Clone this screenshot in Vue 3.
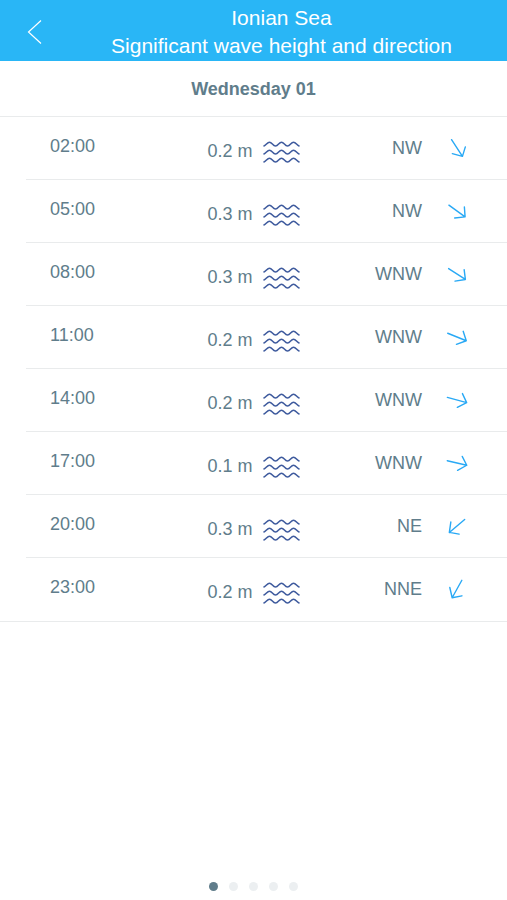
<script setup>
import { ref } from 'vue'

const readings = [
  { time: '02:00', height: '0.2 m', from: 'NW', angle: 57 },
  { time: '05:00', height: '0.3 m', from: 'NW', angle: 36 },
  { time: '08:00', height: '0.3 m', from: 'WNW', angle: 33 },
  { time: '11:00', height: '0.2 m', from: 'WNW', angle: 22 },
  { time: '14:00', height: '0.2 m', from: 'WNW', angle: 15 },
  { time: '17:00', height: '0.1 m', from: 'WNW', angle: 13 },
  { time: '20:00', height: '0.3 m', from: 'NE', angle: 140 },
  { time: '23:00', height: '0.2 m', from: 'NNE', angle: 119 }
]

const pages = 5
const current = ref(1)
</script>

<template>
  <div class="screen">
    <header class="bar">
      <button class="back" type="button" aria-label="Back">
        <svg width="16" height="26" viewBox="0 0 16 26" aria-hidden="true">
          <path d="M14 1.500 1.500 13 14 24.500" />
        </svg>
      </button>
      <h1 class="title">
        <span>Ionian Sea</span>
        <span>Significant wave height and direction</span>
      </h1>
    </header>

    <main class="content">
      <h2 id="day" class="day">Wednesday 01</h2>
      <div class="list">
        <table class="readings" aria-labelledby="day">
          <tbody>
            <tr v-for="r in readings" :key="r.time">
              <th class="time" scope="row">{{ r.time }}</th>
              <td class="wave">
                <div class="wave-box">
                  <span>{{ r.height }}</span>
                  <svg class="waves" width="38" height="22" viewBox="0 0 38 22" aria-hidden="true">
                    <path
                      v-for="y in [0, 8, 16]"
                      :key="y"
                      :transform="`translate(0 ${y})`"
                      d="M1.500 5.200C4.500 4 5 1.200 7.500 1.200S10.800 5 13.500 5 17 1.200 19.500 1.200 22.800 5 25.500 5 29 1.200 31.500 1.200 34.500 4 37.500 5.200"
                    />
                  </svg>
                </div>
              </td>
              <td class="direction">
                <div class="direction-box">
                  <span>{{ r.from }}</span>
                  <svg class="arrow" width="24" height="24" viewBox="-12 -12 24 24" aria-hidden="true">
                    <path :transform="`rotate(${r.angle})`" d="M-10 0H10M3.600-7.600 10 0 2.200 7" />
                  </svg>
                </div>
              </td>
            </tr>
          </tbody>
        </table>
      </div>
    </main>

    <nav class="dots" aria-label="Days">
      <button
        v-for="n in pages"
        :key="n"
        type="button"
        class="dot"
        :class="{ active: n === current }"
        :aria-label="`Day ${n}`"
        @click="current = n"
      ></button>
    </nav>
  </div>
</template>

<style>
body {
  background: #fff;
}
</style>

<style scoped>
.screen {
  display: flex;
  flex-direction: column;
  min-height: 100vh;
  box-sizing: border-box;
  background: #fff;
  color: #607d8b;
  font-family: "Liberation Sans", Arial, Helvetica, sans-serif;
  font-size: 18px;
  line-height: 24px;
}

.bar {
  display: flex;
  align-items: center;
  box-sizing: border-box;
  padding: 4px 0 1px;
  background: #29b6f6;
  color: #fff;
}

.back {
  display: flex;
  flex: none;
  width: 56px;
  padding: 0 0 0 27px;
  border: 0;
  background: none;
  cursor: pointer;
}

.back svg {
  fill: none;
  stroke: #fff;
  stroke-width: 1.2;
}

.title {
  flex: 1;
  display: flex;
  flex-direction: column;
  margin: 0;
  font-size: 21px;
  font-weight: 400;
  line-height: 28px;
  text-align: center;
}

.content {
  flex: 1;
}

.day {
  margin: 0;
  padding: 16px 0 15px;
  border-bottom: 1px solid #e9ebec;
  font-size: 18px;
  font-weight: 700;
  text-align: center;
}

.list {
  padding: 0 0 1px 26px;
  border-bottom: 1px solid #e9ebec;
}

.readings {
  width: 100%;
  table-layout: fixed;
  border-spacing: 0;
}

th,
td {
  height: 62px;
  padding: 0;
  border-bottom: 1px solid #e9ebec;
  font-weight: 400;
  vertical-align: top;
}

tr:last-child > * {
  border-bottom: 0;
}

.time {
  width: 120px;
  height: 45px;
  padding: 17px 0 0 24px;
  text-align: left;
}

.wave-box {
  display: flex;
  justify-content: center;
  gap: 9px;
  padding-top: 22px;
}

.waves {
  margin-top: 2px;
  fill: none;
  stroke: #3f5b9e;
  stroke-width: 1.5;
}

.direction {
  width: 170px;
}

.direction-box {
  display: flex;
  justify-content: flex-end;
  gap: 23px;
  padding: 19px 38px 0 0;
}

.arrow {
  fill: none;
  stroke: #29a9f5;
  stroke-width: 1.4;
  stroke-linecap: round;
  stroke-linejoin: round;
}

.dots {
  display: flex;
  justify-content: center;
  gap: 11px;
  padding: 8px 0 9px;
}

.dot {
  width: 9px;
  height: 9px;
  padding: 0;
  border: 0;
  border-radius: 50%;
  background: #eceff1;
  cursor: pointer;
}

.dot.active {
  background: #607d8b;
}
</style>
